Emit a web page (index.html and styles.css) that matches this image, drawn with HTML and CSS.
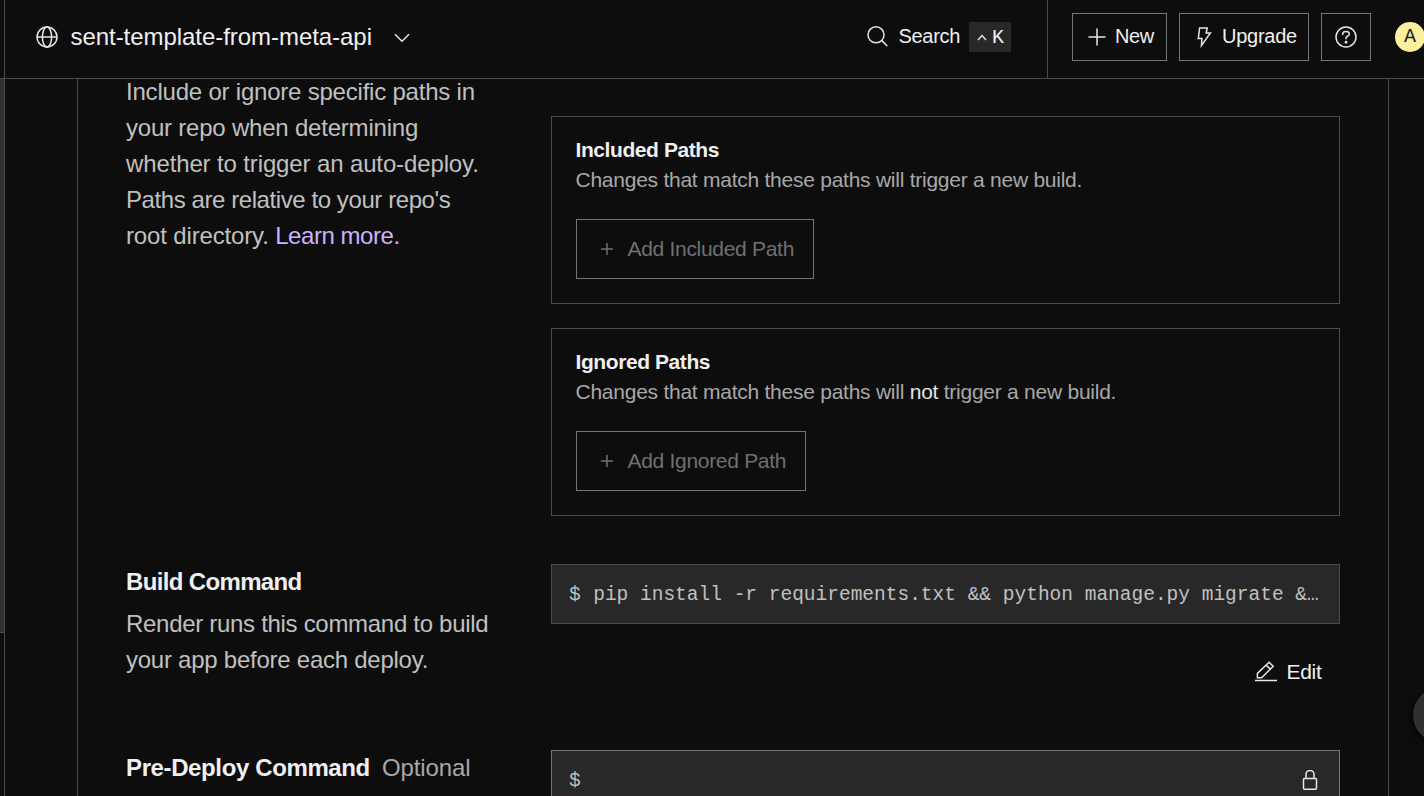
FILE: index.html
```html
<!DOCTYPE html>
<html lang="en">
<head>
<meta charset="utf-8">
<title>sent-template-from-meta-api</title>
<link rel="stylesheet" href="styles.css">
</head>
<body>
<div class="app">
  <aside class="sidebar"><div class="sidebar-panel"></div></aside>
  <div class="page">
    <header class="topbar">
      <div class="service">
        <svg class="globe" width="22" height="22" viewBox="0 0 22 22"><circle cx="11" cy="11" r="10"/><ellipse cx="11" cy="11" rx="4.6" ry="10"/><path d="M1 11h20"/></svg>
        <span class="service-name">sent-template-from-meta-api</span>
        <svg class="chevron" width="16" height="10" viewBox="0 0 16 10"><path d="M1 1.3l7 7 7-7"/></svg>
      </div>
      <div class="search">
        <svg width="22" height="22" viewBox="0 0 22 22"><circle cx="9" cy="8.8" r="8"/><path d="M14.6 14.4l5.6 5.6"/></svg>
        <span class="search-label">Search</span>
        <span class="shortcut"><svg width="10" height="7" viewBox="0 0 10 7"><path d="M1 6l4-4.4L9 6"/></svg><kbd>K</kbd></span>
      </div>
      <div class="actions">
        <button class="btn btn-new"><svg width="18" height="18" viewBox="0 0 18 18"><path d="M9 .5v17M.5 9h17"/></svg><span>New</span></button>
        <button class="btn btn-upgrade"><svg width="16" height="22" viewBox="0 0 16 22"><path d="M2.6 2h7.6l-1 5h4.2L4.4 19.6l.5-7H1.3z"/></svg><span>Upgrade</span></button>
        <button class="btn btn-help"><svg width="22" height="22" viewBox="0 0 22 22"><circle cx="11" cy="11" r="10"/><path d="M7.7 9V8q0-2.6 3.3-2.6T14.3 8q0 1.6-1.7 2.2T11 12.2v1.1"/><circle class="dot" cx="11" cy="16.2" r=".7"/></svg></button>
        <span class="avatar">A</span>
      </div>
    </header>
    <main class="viewport">
      <div class="settings">
        <section class="row row-filters">
          <p class="desc"><span class="l1">Include or ignore specific paths in</span><br><span class="l2">your repo when determining</span><br><span class="l3">whether to trigger an auto-deploy.</span><br><span class="l4">Paths are relative to your repo's</span><br><span class="l5">root directory. </span><a class="learn">Learn more.</a></p>
          <div class="cards">
            <div class="card">
              <h3>Included Paths</h3>
              <p>Changes that match these paths will trigger a new build.</p>
              <button class="add add-included"><svg width="12" height="12" viewBox="0 0 12 12"><path d="M6 0v12M0 6h12"/></svg><span>Add Included Path</span></button>
            </div>
            <div class="card">
              <h3>Ignored Paths</h3>
              <p>Changes that match these paths will <em>not</em> trigger a new build.</p>
              <button class="add add-ignored"><svg width="12" height="12" viewBox="0 0 12 12"><path d="M6 0v12M0 6h12"/></svg><span>Add Ignored Path</span></button>
            </div>
          </div>
        </section>
        <section class="row row-build">
          <div>
            <h2 class="build-title">Build Command</h2>
            <p class="desc build-desc"><span class="b1">Render runs this command to build</span><br>your app before each deploy.</p>
          </div>
          <div>
            <div class="field"><span class="prompt">$</span><span class="cmd">pip install -r requirements.txt &amp;&amp; python manage.py migrate &amp;…</span></div>
            <div class="edit"><svg width="22" height="22" viewBox="0 0 22 22"><path d="M0 19.5h22M2.4 16.7v-4.3L14.1 1.3l4.1 4L6.6 16.7zM11.2 4.1l4.1 4"/></svg><span>Edit</span></div>
          </div>
        </section>
        <section class="row row-pre">
          <h2 class="pre-title">Pre-Deploy Command<span class="optional">Optional</span></h2>
          <div class="field field-locked"><span class="prompt">$</span><svg width="16" height="22" viewBox="0 0 16 22"><rect x="1.5" y="8.5" width="13" height="10.8" rx="1"/><path d="M4 8.5V4.4a4 4 0 0 1 8 0v4.1"/></svg></div>
        </section>
      </div>
    </main>
  </div>
  <div class="fab"></div>
</div>
</body>
</html>
```

FILE: styles.css
```css
* { box-sizing: border-box; }
body { margin: 0; background: #0d0d0d; color: #f0f0f0; font-family: "Liberation Sans", Arial, sans-serif; }
h2, h3, p { margin: 0; }
button { margin: 0; padding: 0; background: none; border: 1px solid #757575; font: inherit; color: inherit; }
svg { display: block; flex: none; fill: none; stroke: #e6e6e6; stroke-width: 1.5; }
.app { position: relative; display: flex; width: 1424px; height: 796px; overflow: hidden; }
.sidebar { width: 5px; padding-top: 78px; border-right: 1px solid #4c4c4c; }
.sidebar-panel { height: 555px; background: #2f2f2f; border-top: 1px solid #4c4c4c; border-bottom: 1px solid #4c4c4c; }
.page { flex: 1; display: flex; flex-direction: column; min-width: 0; }

.topbar { display: flex; height: 79px; flex: none; border-bottom: 1px solid #4c4c4c; }
.service { display: flex; flex: none; align-items: center; width: 861px; height: 74px; padding-left: 31px; }
.service-name { width: 315px; margin-left: 12.5px; font-size: 24px; letter-spacing: -.05px; white-space: nowrap; }
.chevron { margin: 1px 0 0 8.5px; }
.search { display: flex; flex: none; align-items: center; width: 181px; height: 74px; padding-left: 1px; font-size: 20px; }
.search-label { width: 70.5px; margin: 0 0 2px 9.5px; letter-spacing: -.3px; }
.shortcut { display: flex; align-items: center; gap: 5px; width: 42px; height: 30px; padding-left: 8px; background: #282828; }
kbd { font: 20px "Liberation Mono", monospace; }
.actions { display: flex; flex: 1; min-width: 0; padding: 13px 0 0 24px; border-left: 1px solid #4c4c4c; font-size: 20px; }
.btn { display: flex; flex: none; align-items: center; height: 48px; }
.btn span { margin-bottom: 2px; }
.btn-new { width: 95px; padding-left: 15px; gap: 9px; letter-spacing: -.4px; margin-right: 12px; }
.btn-upgrade { width: 130px; padding-left: 17px; gap: 9px; letter-spacing: -.25px; margin-right: 12px; }
.btn-help { width: 50px; justify-content: center; }
.dot { fill: #e6e6e6; }
.avatar { flex: none; width: 30px; height: 30px; margin: 9px 0 0 24px; border-radius: 50%; background: #fcf0a0; color: #222; font: 20px/30px "Liberation Mono", monospace; text-align: center; }

.viewport { flex: 1; overflow: hidden; padding-left: 72px; }
.settings { width: 1312px; height: 717px; padding: 0 48px; border: solid #4c4c4c; border-width: 0 1px; }
.row { display: grid; grid-template-columns: 425px 789px; align-items: start; }
.row-filters { height: 485px; }
.desc { margin-top: -5px; font-size: 24px; line-height: 36px; color: #c0c0c0; white-space: nowrap; }
.l1, .l2 { letter-spacing: -.21px; }
.l3 { letter-spacing: -.13px; }
.l4 { letter-spacing: -.42px; }
.l5 { letter-spacing: -.15px; }
.learn { color: #cbb2ff; letter-spacing: -.45px; }
.cards { display: flex; flex-direction: column; gap: 24px; padding-top: 37px; }
.card { height: 188px; padding: 18px 24px 24px; border: 1px solid #4c4c4c; font-size: 21px; line-height: 30px; }
.card h3 { margin-left: -.5px; font-size: 21px; letter-spacing: -.42px; }
.card p { margin: 0 0 24px -.5px; color: #a8a8a8; letter-spacing: -.25px; white-space: nowrap; }
.card em { font-style: normal; color: #e6e6e6; }
.add { display: flex; align-items: center; height: 60px; padding-left: 24px; gap: 14.5px; color: #707070; letter-spacing: -.3px; white-space: nowrap; }
.add svg { stroke: #707070; }
.add-included { width: 238px; }
.add-ignored { width: 230px; }

.row-build { height: 186px; }
h2 { font-size: 24px; line-height: 36px; white-space: nowrap; }
.build-title { letter-spacing: -.65px; }
.build-desc { margin-top: 6px; letter-spacing: -.25px; }
.b1 { letter-spacing: -.3px; }
.field { display: flex; align-items: center; height: 60px; padding: 2px 17px 0; border: 1px solid #4c4c4c; background: #282828; color: #c0c0c0; font: 19.5px "Liberation Mono", monospace; }
.cmd { margin-left: 12.5px; white-space: pre; }
.edit { display: flex; align-items: center; justify-content: flex-end; gap: 9.5px; height: 30px; margin-top: 33px; padding-right: 18.5px; font-size: 21px; letter-spacing: -.3px; }
.pre-title { letter-spacing: -.38px; }
.optional { margin-left: 12px; font-weight: 400; color: #a8a8a8; letter-spacing: -.1px; }
.field-locked { justify-content: space-between; padding-right: 21px; border-color: #757575; }
.fab { position: absolute; left: 1413px; top: 687px; width: 56px; height: 56px; border-radius: 50%; background: #303030; box-shadow: 0 2px 8px #000; }
```
